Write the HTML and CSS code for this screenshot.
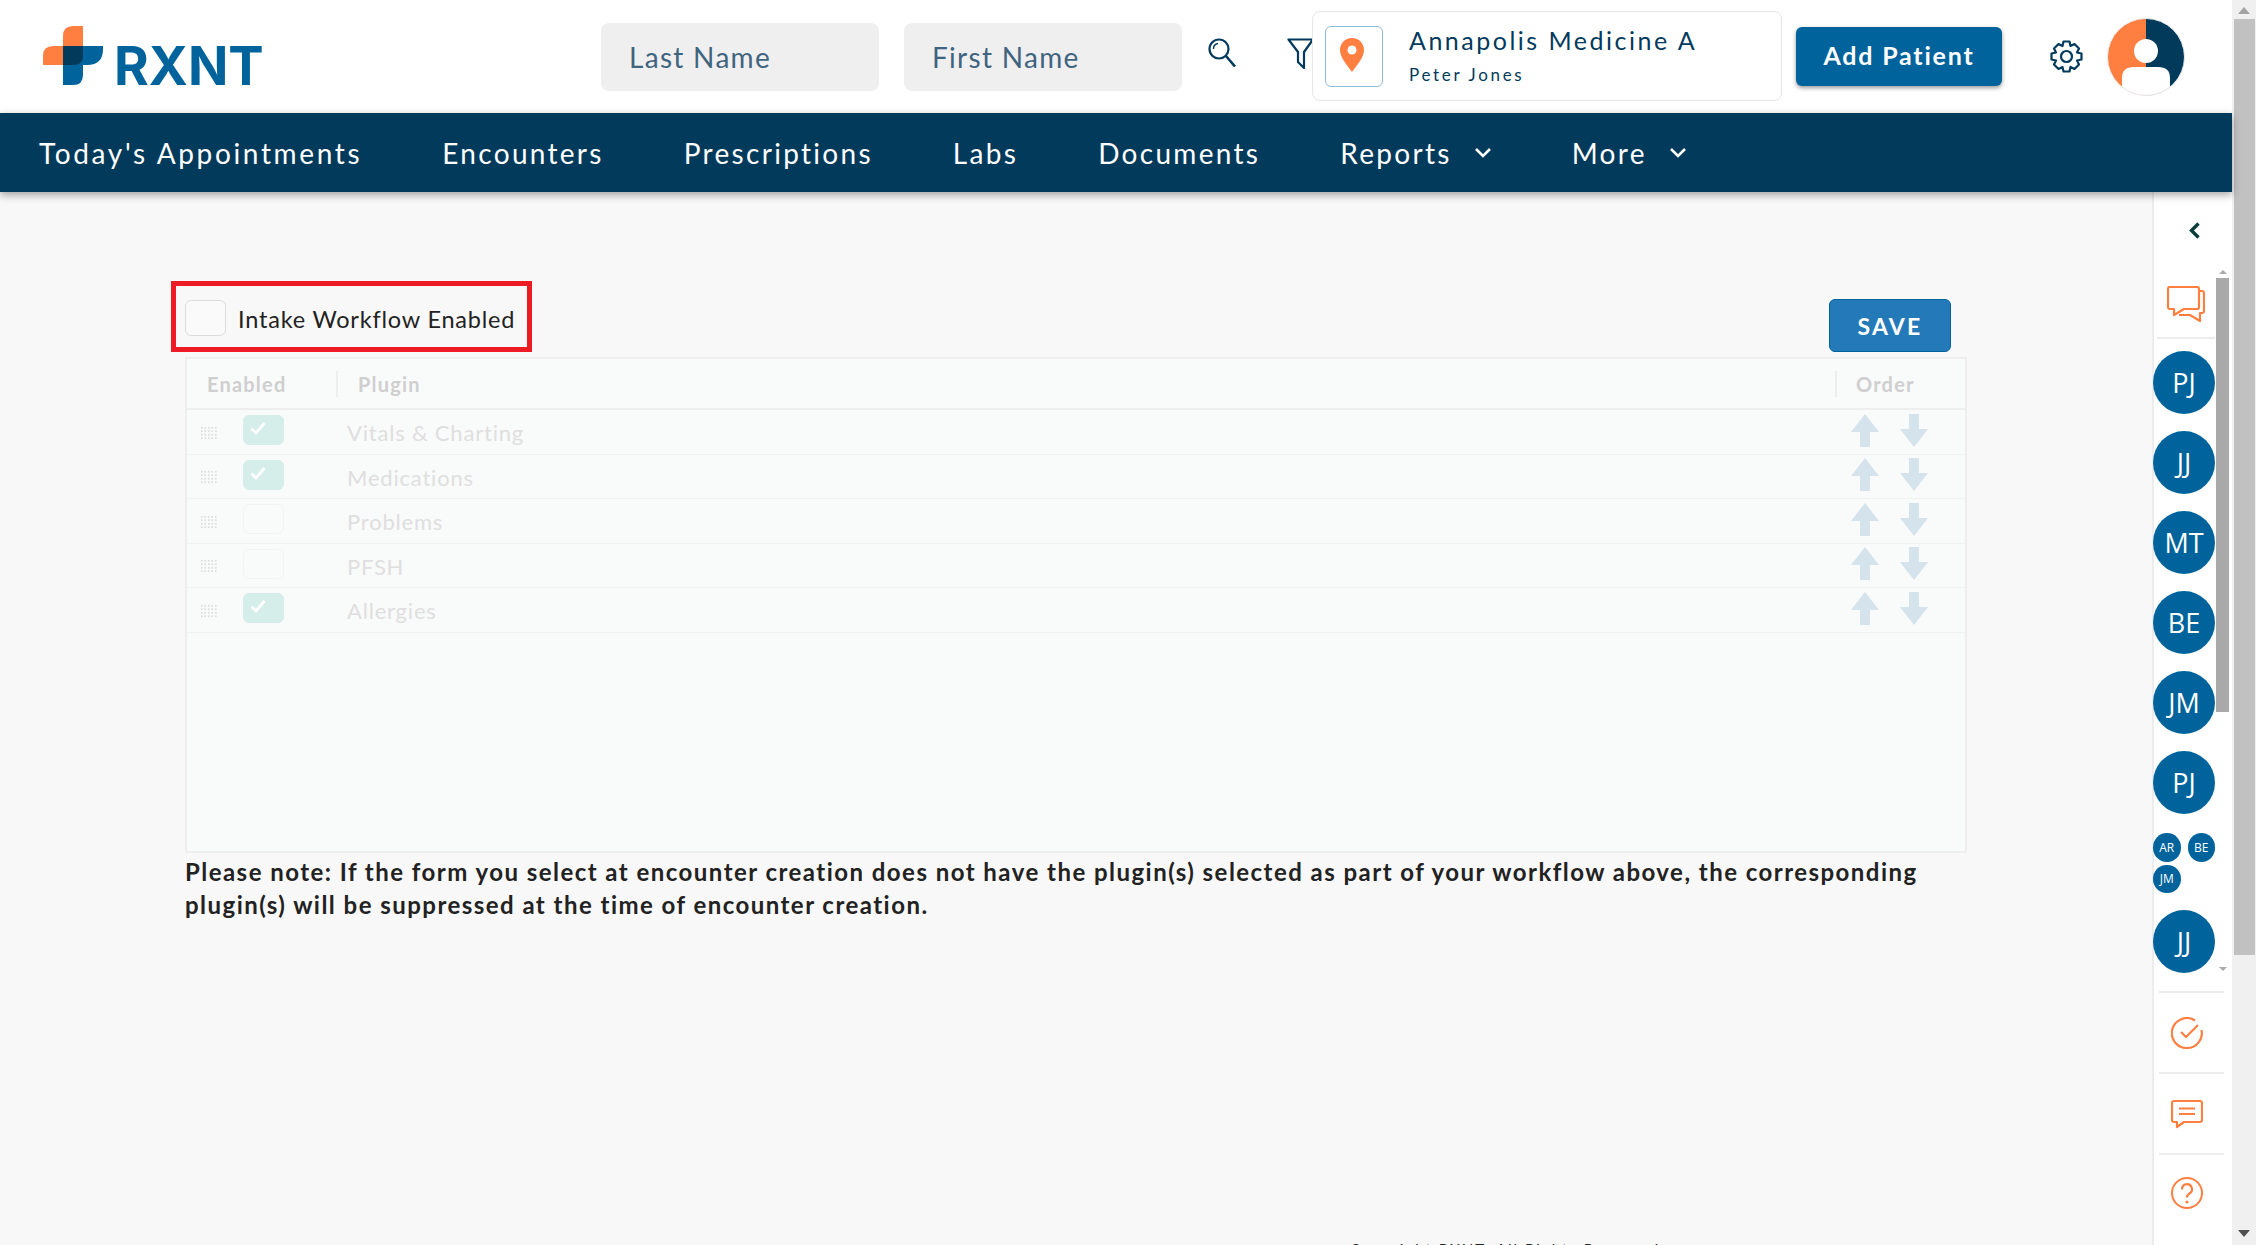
FILE: index.html
```html
<!DOCTYPE html>
<html lang="en">
<head>
    <meta charset="UTF-8">
    <title>RXNT - Intake Workflow</title>
    <link rel="stylesheet" href="styles.css">
</head>
<body>
    <div class="app">
        <header class="header">
            <a class="logo">
                <svg class="logo-mark" viewBox="43 27 60 60">
                    <path d="M63 47V37Q63 27 73 27H83V57Q83 66 73 66H43V57Q43 47 53 47Z" fill="#ff7f41"/>
                    <path d="M63 47H103V50Q103 66 87 66H83V76Q83 86 73 86H63Z" fill="#00639c"/>
                    <path d="M63 47H83V57Q83 66 73 66H63Z" fill="#023a5c"/>
                </svg>
                <span class="logo-text">RXNT</span>
            </a>
            <div class="search">
                <input class="search-input" placeholder="Last Name">
                <input class="search-input" placeholder="First Name">
            </div>
            <svg class="icon-search" viewBox="0 0 28 29" fill="none" stroke="#023a5c" stroke-width="2.2">
                <circle cx="11" cy="11" r="9.5"/>
                <path d="M18 18L27 28.5" stroke-width="2.6"/>
                <path d="M5.5 11A5.5 5.5 0 0 1 10 5.5" stroke-width="1.4"/>
            </svg>
            <svg class="icon-filter" viewBox="0 0 27 31" fill="none" stroke="#023a5c" stroke-width="2.2" stroke-linejoin="round">
                <path d="M1.5 1.5H26L17 14V30L11 24V14Z"/>
            </svg>
            <div class="location">
                <div class="pin-box">
                    <svg class="icon-pin" viewBox="0 0 24 34">
                        <path d="M12 0C5 0 0 5.5 0 12C0 20 8 28 12 34C16 28 24 20 24 12C24 5.5 19 0 12 0Z" fill="#ff7f41"/>
                        <circle cx="12" cy="12" r="4.5" fill="#fff"/>
                    </svg>
                </div>
                <div class="location-text">
                    <div class="location-name">Annapolis Medicine A</div>
                    <div class="location-user">Peter Jones</div>
                </div>
            </div>
            <button class="add-patient">Add Patient</button>
            <svg class="icon-gear" viewBox="0 0 33 33" fill="none" stroke="#023a5c" stroke-width="2.2" stroke-linejoin="round">
                <path d="M13.5 1.5H19.5L20.5 6L24.5 4L29 8.5L27 12.5L31.5 13.5V19.5L27 20.5L29 24.5L24.5 29L20.5 27L19.5 31.5H13.5L12.5 27L8.5 29L4 24.5L6 20.5L1.5 19.5V13.5L6 12.5L4 8.5L8.5 4L12.5 6Z"/>
                <circle cx="16.5" cy="16.5" r="5.5"/>
            </svg>
            <svg class="avatar" viewBox="0 0 78 78">
                <defs>
                    <clipPath id="avatar-clip"><circle cx="39" cy="39" r="38.5"/></clipPath>
                </defs>
                <g clip-path="url(#avatar-clip)">
                    <rect width="39" height="78" fill="#ff7f41"/>
                    <rect x="39" width="39" height="78" fill="#023a5c"/>
                    <circle cx="39" cy="33" r="12" fill="#fff"/>
                    <path d="M15 78V60Q15 49 27 49H51Q63 49 63 60V78Z" fill="#fff"/>
                </g>
                <circle cx="39" cy="39" r="38.5" fill="none" stroke="#e8e8e8"/>
            </svg>
        </header>

        <nav class="nav">
            <a class="nav-link">Today's Appointments</a>
            <a class="nav-link">Encounters</a>
            <a class="nav-link">Prescriptions</a>
            <a class="nav-link">Labs</a>
            <a class="nav-link">Documents</a>
            <a class="nav-link">Reports
                <svg class="nav-chevron" viewBox="0 0 18 11"><path d="M2 2L9 9L16 2"/></svg>
            </a>
            <a class="nav-link">More
                <svg class="nav-chevron" viewBox="0 0 18 11"><path d="M2 2L9 9L16 2"/></svg>
            </a>
        </nav>

        <div class="page">
            <main class="content">
                <div class="toolbar">
                    <label class="intake">
                        <span class="intake-box"></span>
                        <span class="intake-label">Intake Workflow Enabled</span>
                    </label>
                    <button class="save">SAVE</button>
                </div>

                <div class="grid">
                    <div class="grid-head">
                        <div class="col-enabled">Enabled</div>
                        <div class="col-plugin">Plugin</div>
                        <div class="col-order">Order</div>
                    </div>
                    <div class="grid-row">
                        <div class="handle"></div>
                        <div class="check on"><svg viewBox="0 0 16 14"><path d="M1.5 7.5L6 12L14.5 2"/></svg></div>
                        <div class="plugin-name">Vitals &amp; Charting</div>
                        <div class="arrows">
                            <svg viewBox="0 0 28 33"><path d="M14 0L28 18H19V33H9V18H0Z"/></svg>
                            <svg viewBox="0 0 28 33"><path d="M14 33L28 15H19V0H9V15H0Z"/></svg>
                        </div>
                    </div>
                    <div class="grid-row">
                        <div class="handle"></div>
                        <div class="check on"><svg viewBox="0 0 16 14"><path d="M1.5 7.5L6 12L14.5 2"/></svg></div>
                        <div class="plugin-name">Medications</div>
                        <div class="arrows">
                            <svg viewBox="0 0 28 33"><path d="M14 0L28 18H19V33H9V18H0Z"/></svg>
                            <svg viewBox="0 0 28 33"><path d="M14 33L28 15H19V0H9V15H0Z"/></svg>
                        </div>
                    </div>
                    <div class="grid-row">
                        <div class="handle"></div>
                        <div class="check"></div>
                        <div class="plugin-name">Problems</div>
                        <div class="arrows">
                            <svg viewBox="0 0 28 33"><path d="M14 0L28 18H19V33H9V18H0Z"/></svg>
                            <svg viewBox="0 0 28 33"><path d="M14 33L28 15H19V0H9V15H0Z"/></svg>
                        </div>
                    </div>
                    <div class="grid-row">
                        <div class="handle"></div>
                        <div class="check"></div>
                        <div class="plugin-name">PFSH</div>
                        <div class="arrows">
                            <svg viewBox="0 0 28 33"><path d="M14 0L28 18H19V33H9V18H0Z"/></svg>
                            <svg viewBox="0 0 28 33"><path d="M14 33L28 15H19V0H9V15H0Z"/></svg>
                        </div>
                    </div>
                    <div class="grid-row">
                        <div class="handle"></div>
                        <div class="check on"><svg viewBox="0 0 16 14"><path d="M1.5 7.5L6 12L14.5 2"/></svg></div>
                        <div class="plugin-name">Allergies</div>
                        <div class="arrows">
                            <svg viewBox="0 0 28 33"><path d="M14 0L28 18H19V33H9V18H0Z"/></svg>
                            <svg viewBox="0 0 28 33"><path d="M14 33L28 15H19V0H9V15H0Z"/></svg>
                        </div>
                    </div>
                </div>

                <p class="note">Please note: If the form you select at encounter creation does not have the plugin(s) selected as part of your workflow above, the corresponding plugin(s) will be suppressed at the time of encounter creation.</p>
                <div class="footer-clip">Copyright RXNT. All Rights Reserved.</div>
            </main>

            <aside class="sidebar">
                <div class="collapse">
                    <svg viewBox="0 0 11 17"><path d="M9.5 1.5L2.5 8.5L9.5 15.5"/></svg>
                </div>
                <div class="side-scroll">
                    <div class="side-list">
                        <div class="side-chat">
                            <svg viewBox="0 0 38 36" fill="none" stroke="#ff7f41" stroke-width="2.2" stroke-linejoin="round">
                                <path d="M3 1H30Q32 1 32 3V21Q32 23 30 23H17L7 29V23H3Q1 23 1 21V3Q1 1 3 1Z"/>
                                <path d="M32 5H35Q37 5 37 7V25Q37 27 35 27H33V35L23 29H12"/>
                            </svg>
                        </div>
                        <div class="bubble">PJ</div>
                        <div class="bubble">JJ</div>
                        <div class="bubble">MT</div>
                        <div class="bubble">BE</div>
                        <div class="bubble">JM</div>
                        <div class="bubble">PJ</div>
                        <div class="bubble-group">
                            <div class="bubble-small">AR</div>
                            <div class="bubble-small">BE</div>
                            <div class="bubble-small">JM</div>
                        </div>
                        <div class="bubble">JJ</div>
                    </div>
                    <div class="side-track">
                        <span class="side-up"></span>
                        <span class="side-thumb"></span>
                        <span class="side-down"></span>
                    </div>
                </div>
                <div class="side-action">
                    <svg viewBox="0 0 32 32" fill="none" stroke="#ff7f41" stroke-width="2.2">
                        <path d="M24 3.5A15 15 0 1 0 30.5 13"/>
                        <path d="M10 15L15 20L27 8"/>
                    </svg>
                </div>
                <div class="side-action">
                    <svg viewBox="0 0 32 28" fill="none" stroke="#ff7f41" stroke-width="2.2" stroke-linejoin="round">
                        <path d="M3 1H29Q31 1 31 3V20Q31 22 29 22H13L6 27V22H3Q1 22 1 20V3Q1 1 3 1Z"/>
                        <path d="M8 8.5H24M8 14H24"/>
                    </svg>
                </div>
                <div class="side-action">
                    <svg viewBox="0 0 32 32" fill="none" stroke="#ff7f41" stroke-width="2">
                        <circle cx="16" cy="16" r="15"/>
                        <path d="M11 12.5A5 5 0 1 1 18.5 16.5Q16 18 16 20.5" stroke-width="2.2"/>
                        <circle cx="16" cy="25" r="1.6" fill="#ff7f41" stroke="none"/>
                    </svg>
                </div>
            </aside>
        </div>
    </div>

    <div class="page-scroll">
        <span class="scroll-up"></span>
        <span class="scroll-thumb"></span>
        <span class="scroll-down"></span>
    </div>
</body>
</html>
```

FILE: styles.css
```css
:root {
    --navy: #023a5c;
    --blue: #00639c;
    --orange: #ff7f41;
    --page-bg: #f8f8f8;
}

* {
    margin: 0;
    padding: 0;
    box-sizing: border-box;
    font-family: Lato, "Open Sans", sans-serif;
}

html, body {
    height: 1245px;
    overflow: hidden;
}

body {
    display: flex;
    background: var(--page-bg);
    color: #222;
}

.app {
    width: 2232px;
    display: flex;
    flex-direction: column;
}

/* header */
.header {
    height: 113px;
    background: white;
    display: flex;
    align-items: center;
    padding-left: 43px;
}

.logo {
    display: flex;
    align-items: flex-end;
    width: 219px;
    height: 60px;
    margin-top: -1px;
}

.logo-mark {
    width: 60px;
    height: 60px;
    flex: none;
}

.logo-text {
    font-family: Inter, sans-serif;
    font-weight: 700;
    font-size: 53px;
    line-height: 39px;
    height: 39px;
    margin-left: 11px;
    color: var(--blue);
}

.search {
    display: flex;
    gap: 25px;
    margin-left: 339px;
    margin-right: 26px;
}

.search-input {
    width: 278px;
    height: 68px;
    border: 0;
    border-radius: 8px;
    background: #efefef;
    padding-left: 28px;
    font-size: 28px;
    letter-spacing: 1.3px;
    outline: none;
}

.search-input::placeholder {
    color: #3f6480;
    opacity: 1;
}

.icon-search {
    width: 28px;
    height: 29px;
    margin-top: -8px;
    flex: none;
}

.icon-filter {
    width: 27px;
    height: 31px;
    margin-left: 51px;
    margin-top: -6px;
    flex: none;
}

.location {
    width: 470px;
    height: 90px;
    margin-left: -2px;
    background: white;
    border: 1px solid #e6e6e6;
    border-radius: 8px;
    display: flex;
    align-items: center;
    padding-left: 12px;
    margin-top: -1px;
}

.pin-box {
    width: 58px;
    height: 61px;
    border: 1px solid #8fbcd6;
    border-radius: 6px;
    display: flex;
    align-items: center;
    justify-content: center;
}

.icon-pin {
    width: 24px;
    height: 34px;
    margin-bottom: 2px;
    margin-right: 4px;
}

.location-text {
    margin-left: 26px;
    color: var(--navy);
}

.location-name {
    font-size: 25px;
    letter-spacing: 2.5px;
    line-height: 32px;
    margin-top: -3px;
}

.location-user {
    font-size: 17px;
    letter-spacing: 2.7px;
    line-height: 22px;
    margin-top: 8px;
}

.add-patient {
    width: 206px;
    height: 59px;
    margin-left: 14px;
    margin-top: -1px;
    padding-bottom: 2px;
    border: 0;
    border-radius: 6px;
    background: var(--blue);
    color: white;
    font-size: 25px;
    font-weight: 700;
    letter-spacing: 1.8px;
    box-shadow: 0 2px 4px rgba(0,0,0,0.4);
}

.icon-gear {
    width: 33px;
    height: 33px;
    margin-left: 48px;
    margin-top: -1px;
    flex: none;
}

.avatar {
    width: 78px;
    height: 78px;
    margin-left: 24px;
    flex: none;
}

/* nav */
.nav {
    height: 79px;
    background: var(--navy);
    display: flex;
    align-items: center;
    gap: 80px;
    padding-left: 39px;
    box-shadow: 0 3px 8px rgba(0,0,0,0.35);
    position: relative;
}

.nav-link {
    color: white;
    font-size: 28px;
    letter-spacing: 2.3px;
    display: flex;
    align-items: center;
    gap: 22px;
}

.nav-link:first-child {
    letter-spacing: 2.65px;
}

.nav-chevron {
    width: 18px;
    height: 11px;
    fill: none;
    stroke: white;
    stroke-width: 2.6;
}

/* main area */
.page {
    flex: 1;
    display: flex;
    min-height: 0;
}

.content {
    width: 2152px;
    padding: 89px 0 0 185px;
    overflow: hidden;
    position: relative;
}

.toolbar {
    width: 1781px;
    display: flex;
    justify-content: space-between;
    align-items: flex-end;
}

.intake {
    width: 361px;
    height: 71px;
    margin-left: -14px;
    border: 5px solid #ed1c24;
    display: flex;
    align-items: center;
    padding-left: 9px;
}

.intake-box {
    width: 41px;
    height: 36px;
    border: 1px solid #dcdcdc;
    border-radius: 6px;
    background: #fafafa;
    margin-right: 12px;
    margin-top: 2px;
    flex: none;
}

.intake-label {
    font-size: 23.5px;
    letter-spacing: 0.8px;
    color: #222;
    white-space: nowrap;
    margin-top: 5px;
}

.save {
    width: 122px;
    height: 53px;
    margin-right: 15px;
    border: 1px solid #00639c;
    border-radius: 6px;
    background: #247ab9;
    color: white;
    font-size: 23px;
    font-weight: 700;
    letter-spacing: 2.2px;
}

.grid {
    width: 1782px;
    height: 496px;
    margin-top: 5px;
    border: 2px solid #eeeeee;
    background: #f9fafa;
}

.grid-head {
    height: 51px;
    display: flex;
    align-items: center;
    border-bottom: 2px solid #eeeeee;
    color: #cfcfcf;
    font-size: 20px;
    font-weight: 700;
    letter-spacing: 1.2px;
}

.col-enabled {
    width: 151px;
    padding-left: 20px;
    border-right: 2px solid #eeeeee;
    line-height: 26px;
}

.col-plugin {
    flex: 1;
    padding-left: 20px;
}

.col-order {
    width: 130px;
    height: 26px;
    line-height: 26px;
    padding-left: 19px;
    border-left: 2px solid #eeeeee;
}

.grid-row {
    height: 44.5px;
    display: flex;
    align-items: center;
    border-bottom: 1px solid #f1f2f2;
}

.handle {
    width: 17px;
    height: 14px;
    margin-left: 13px;
    margin-top: 2px;
    background-image: radial-gradient(#dddddd 1px, transparent 1.2px);
    background-size: 3.5px 3.5px;
}

.check {
    width: 41px;
    height: 30px;
    margin-left: 26px;
    margin-bottom: 3px;
    border: 1px solid #f2f3f3;
    border-radius: 6px;
    display: flex;
    padding: 5px 0 0 6px;
}

.check.on {
    background: #d5eee9;
    border-color: #d5eee9;
}

.check svg {
    width: 16px;
    height: 14px;
    fill: none;
    stroke: white;
    stroke-width: 2.8;
}

.plugin-name {
    flex: 1;
    margin-left: 63px;
    margin-top: 2px;
    font-size: 22px;
    letter-spacing: 0.8px;
    color: #dfdfdf;
}

.arrows {
    width: 114px;
    display: flex;
    gap: 21px;
    margin-bottom: 3px;
}

.arrows svg {
    width: 28px;
    height: 33px;
    fill: #d5e3ed;
}

.note {
    width: 1781px;
    margin-top: 2px;
    font-size: 24px;
    font-weight: 700;
    line-height: 33px;
    letter-spacing: 1.46px;
    color: #222;
}

.footer-clip {
    position: absolute;
    top: 1048px;
    left: 1350px;
    font-size: 15px;
    letter-spacing: 2px;
    color: #222;
    white-space: nowrap;
}

/* right rail */
.sidebar {
    width: 80px;
    background: white;
    border-left: 2px solid #ececec;
    display: flex;
    flex-direction: column;
}

.collapse {
    height: 70px;
    padding: 30px 0 0 35px;
}

.collapse svg {
    width: 11px;
    height: 17px;
    fill: none;
    stroke: #0a3d3a;
    stroke-width: 3.4;
}

.side-scroll {
    height: 729px;
    display: flex;
}

.side-list {
    width: 62px;
    margin-left: -1px;
    overflow: hidden;
    padding-top: 16px;
}

.side-chat {
    height: 61px;
    padding: 8px 0 0 13px;
    border-bottom: 2px solid #ececec;
    margin-left: 4px;
    margin-bottom: -5px;
}

.side-chat svg {
    width: 38px;
    height: 36px;
    margin-left: -3px;
}

.bubble {
    width: 62px;
    height: 63px;
    margin-top: 17px;
    border-radius: 50%;
    background: var(--blue);
    color: white;
    font-family: "Open Sans", sans-serif;
    font-size: 27px;
    display: flex;
    align-items: center;
    justify-content: center;
}

.bubble-group {
    display: flex;
    flex-wrap: wrap;
    gap: 3px 7px;
    margin-top: 19px;
    margin-bottom: 1px;
}

.bubble-small {
    width: 27.5px;
    height: 28.5px;
    border-radius: 50%;
    background: var(--blue);
    color: white;
    font-family: "Open Sans", sans-serif;
    font-size: 12px;
    display: flex;
    align-items: center;
    justify-content: center;
}

.side-track {
    width: 13px;
    margin-left: 1px;
    display: flex;
    flex-direction: column;
    align-items: center;
    padding-top: 8px;
}

.side-up, .side-down {
    width: 0;
    height: 0;
    border-left: 4px solid transparent;
    border-right: 4px solid transparent;
}

.side-up {
    border-bottom: 4px solid #aaaaaa;
    margin-bottom: 4px;
}

.side-thumb {
    width: 13px;
    height: 434px;
    background: #a9a9a9;
}

.side-down {
    border-top: 4px solid #aaaaaa;
    margin-top: auto;
    margin-bottom: 20px;
}

.side-action {
    height: 81px;
    margin-left: 5px;
    width: 65px;
    padding-right: 9px;
    border-top: 2px solid #ececec;
    display: flex;
    align-items: center;
    justify-content: center;
}

.side-action svg {
    width: 32px;
    height: 32px;
}

.side-action:last-child svg {
    margin-bottom: 4px;
}

/* browser scrollbar */
.page-scroll {
    width: 24px;
    background: #f0f0f0;
    display: flex;
    flex-direction: column;
    align-items: center;
}

.scroll-up, .scroll-down {
    width: 0;
    height: 0;
    border-left: 6px solid transparent;
    border-right: 6px solid transparent;
}

.scroll-up {
    border-bottom: 7px solid #a3a3a3;
    margin: 7px 0 5px;
}

.scroll-thumb {
    width: 21px;
    height: 936px;
    background: #c1c1c1;
}

.scroll-down {
    border-top: 7px solid #505050;
    margin-top: auto;
    margin-bottom: 8px;
}
```
